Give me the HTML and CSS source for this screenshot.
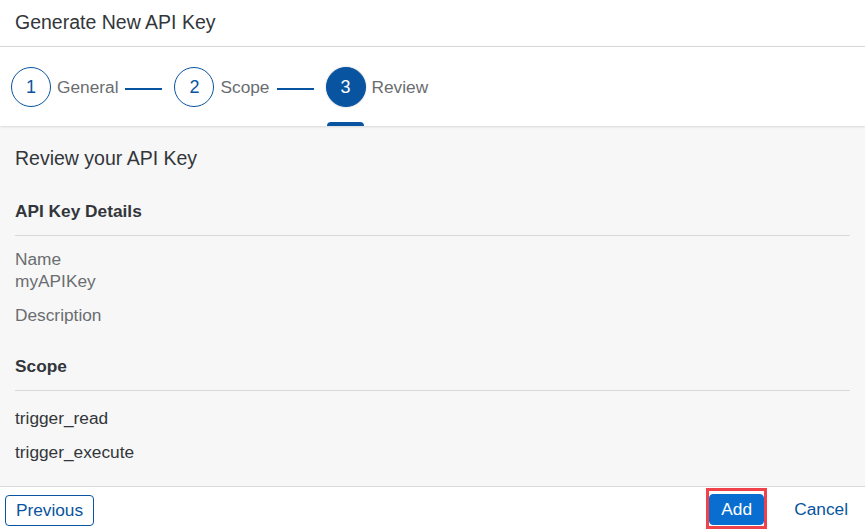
FILE: index.html
```html
<!DOCTYPE html>
<html>
<head>
<meta charset="utf-8">
<link rel="stylesheet" href="styles.css">
</head>
<body>
<div class="dialog">
  <header class="dlg-header">
    <h1 class="dlg-title">Generate New API Key</h1>
  </header>
  <nav class="wizard">
    <div class="step">
      <span class="circle">1</span>
      <span class="step-label">General</span>
      <span class="connector"></span>
    </div>
    <div class="step">
      <span class="circle">2</span>
      <span class="step-label">Scope</span>
      <span class="connector"></span>
    </div>
    <div class="step step-current">
      <span class="circle circle-current">3</span>
      <span class="step-label">Review</span>
    </div>
  </nav>
  <main class="content">
    <h2 class="review-title">Review your API Key</h2>
    <section class="group">
      <h3 class="group-title">API Key Details</h3>
      <div class="field">
        <div class="label">Name</div>
        <div class="value">myAPIKey</div>
      </div>
      <div class="field field-desc">
        <div class="label">Description</div>
      </div>
    </section>
    <section class="group group-scope">
      <h3 class="group-title">Scope</h3>
      <div class="scope-item">trigger_read</div>
      <div class="scope-item">trigger_execute</div>
    </section>
  </main>
  <footer class="dlg-footer">
    <button class="btn btn-ghost">Previous</button>
    <div class="footer-right">
      <span class="highlight"><button class="btn btn-emph">Add</button></span>
      <button class="btn btn-trans">Cancel</button>
    </div>
  </footer>
</div>
</body>
</html>
```

FILE: styles.css
```css
* { box-sizing: border-box; }
html, body { margin: 0; padding: 0; }
body {
  font-family: "Liberation Sans", Arial, sans-serif;
  color: #32363a;
  background: #ffffff;
  width: 865px;
  height: 529px;
  overflow: hidden;
}
.dialog {
  display: flex;
  flex-direction: column;
  height: 529px;
}
.dlg-header {
  height: 47px;
  border-bottom: 1px solid #d9d9d9;
  display: flex;
  align-items: center;
  padding-left: 15px;
  flex: none;
}
.dlg-title {
  margin: 0;
  font-size: 19.5px;
  font-weight: normal;
  color: #32363a;
  position: relative;
  top: -1px;
}
.wizard {
  height: 79px;
  flex: none;
  display: flex;
  align-items: stretch;
  padding: 1px 0 0 11px;
  background: #fff;
  position: relative;
  z-index: 1;
  box-shadow: 0 1px 2px rgba(0,0,0,0.12);
}
.step {
  display: flex;
  align-items: center;
  position: relative;
}
.circle {
  width: 40px;
  height: 40px;
  border-radius: 50%;
  border: 1px solid #0854a0;
  color: #0854a0;
  display: flex;
  align-items: center;
  justify-content: center;
  font-size: 18px;
  background: #fff;
  flex: none;
}
.circle-current {
  background: #0854a0;
  color: #fff;
  box-shadow: 0 0 2px rgba(0,0,0,0.25);
}
.step-label {
  margin-left: 6px;
  font-size: 17.3px;
  color: #6a6d70;
}
.connector {
  display: block;
  width: 37px;
  height: 2px;
  background: #0854a0;
  margin: 3px 12px 0 7px;
}
.step-current::after {
  content: "";
  position: absolute;
  left: 1px;
  bottom: 0;
  width: 37px;
  height: 4px;
  background: #0854a0;
  border-radius: 4px 4px 0 0;
}
.content {
  flex: 1;
  background: #f7f7f7;
  padding: 21px 15px 0 15px;
  border-bottom: 1px solid #d9d9d9;
}
.review-title {
  margin: 0;
  font-size: 19.5px;
  line-height: 22px;
  font-weight: normal;
  color: #32363a;
}
.group { margin-top: 32px; }
.group-scope { margin-top: 30px; }
.group-title {
  margin: 0;
  font-size: 17.3px;
  line-height: 20px;
  font-weight: bold;
  color: #32363a;
  padding-bottom: 14px;
  border-bottom: 1px solid #d9d9d9;
}
.field { margin-top: 12px; }
.field-desc { margin-top: 12px; }
.label, .value {
  font-size: 17.3px;
  line-height: 22px;
  color: #6a6d70;
}
.scope-item {
  font-size: 17.3px;
  line-height: 20px;
  color: #32363a;
  margin-top: 14px;
}
.group-scope .group-title + .scope-item { margin-top: 17px; }
.dlg-footer {
  height: 42px;
  flex: none;
  display: flex;
  align-items: flex-start;
  justify-content: space-between;
  padding: 1px 4px 0 5px;
}
.footer-right {
  display: flex;
  align-items: flex-start;
  gap: 14px;
}
.btn {
  font-family: "Liberation Sans", Arial, sans-serif;
  font-size: 17.3px;
  height: 31px;
  border-radius: 4px;
  padding: 0 10px;
  cursor: pointer;
  background: transparent;
  border: 1px solid transparent;
  color: #0854a0;
  display: block;
}
.btn-ghost {
  border-color: #0854a0;
  background: #fff;
  margin-top: 7px;
  width: 89px;
  padding: 0;
}
.highlight {
  display: block;
  border: 3px solid #f0424a;
  padding: 3px 0 1px 0;
}
.btn-emph {
  background: #0a6ed1;
  border-color: #0a6ed1;
  color: #fff;
  width: 55px;
  padding: 0;
}
.btn-trans {
  padding: 0 12px;
  margin-top: 6px;
}
```
